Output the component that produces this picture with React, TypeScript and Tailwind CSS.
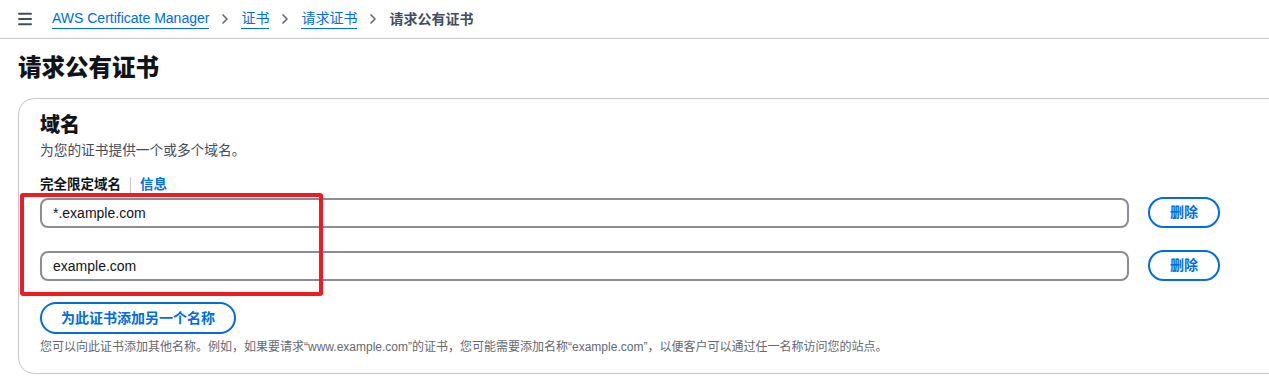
import { Menu, ChevronRight } from 'lucide-react';

const font = { fontFamily: '"Liberation Sans", "Noto Sans CJK SC", sans-serif' };

function Crumb({ label }: { label: string }) {
  return (
    <a className="text-[#006ce0] border-b border-[#006ce0] leading-[17px] pb-[1px]" href="#">
      {label}
    </a>
  );
}

function DomainRow({ value }: { value: string }) {
  return (
    <div className="flex items-center gap-[19px]">
      <div className="w-[1089px] h-[30px] rounded-[8px] border-2 border-[#8c8c94] flex items-center px-[11px] pt-[1px] text-[14px] text-[#0f141a]">
        {value}
      </div>
      <button className="w-[72px] h-[31px] rounded-full border-2 border-[#006ce0] text-[#006ce0] text-[14px] font-bold">
        删除
      </button>
    </div>
  );
}

export default function App() {
  return (
    <div className="w-[1269px] h-[384px] bg-white overflow-hidden relative text-[#0f141a]" style={font}>
      {/* Breadcrumb bar */}
      <div className="h-[39px] border-b border-[#c6c6cd] flex items-center pl-[16px] text-[14px]">
        <Menu className="w-[18px] h-[18px] text-[#414d5c] mr-[18px]" strokeWidth={2.5} />
        <Crumb label="AWS Certificate Manager" />
        <ChevronRight className="w-[16px] h-[16px] text-[#656871] mx-[8px]" strokeWidth={2.5} />
        <Crumb label="证书" />
        <ChevronRight className="w-[16px] h-[16px] text-[#656871] mx-[8px]" strokeWidth={2.5} />
        <Crumb label="请求证书" />
        <ChevronRight className="w-[16px] h-[16px] text-[#656871] mx-[8px]" strokeWidth={2.5} />
        <span className="text-[#414d5c] font-bold">请求公有证书</span>
      </div>

      <div className="pl-[18px]">
        <h1 className="text-[23.5px] font-[800] leading-[30px] mt-[14px] text-[#0f141a]">请求公有证书</h1>

        {/* Domain card */}
        <div className="mt-[15px] w-[1300px] h-[276px] border border-[#c6c6cd] rounded-[16px] pl-[21px] pt-[14px]">
          <h2 className="text-[20px] font-[800] leading-[24px]">域名</h2>
          <p className="text-[13.7px] text-[#414d5c] leading-[18px] mt-[5px]">为您的证书提供一个或多个域名。</p>

          <div className="flex items-center mt-[16px] text-[13.5px] leading-[18px]">
            <span className="font-bold">完全限定域名</span>
            <span className="w-px h-[16px] bg-[#c6c6cd] mx-[9px]" />
            <a className="text-[#006ce0] font-bold" href="#">信息</a>
          </div>

          <div className="mt-[3px] flex flex-col gap-[22px]">
            <DomainRow value="*.example.com" />
            <DomainRow value="example.com" />
          </div>

          <button className="mt-[21px] h-[32px] px-[19px] rounded-full border-2 border-[#006ce0] text-[#006ce0] text-[14px] font-bold">
            为此证书添加另一个名称
          </button>
          <p className="text-[12px] text-[#656871] leading-[16px] mt-[5px]">
            您可以向此证书添加其他名称。例如，如果要请求“www.example.com”的证书，您可能需要添加名称“example.com”，以便客户可以通过任一名称访问您的站点。
          </p>
        </div>
      </div>

      {/* Annotation box */}
      <div className="absolute left-[20px] top-[193px] w-[303px] h-[103px] border-[4px] border-[#ed1c24] rounded-[3px]" />
    </div>
  );
}
